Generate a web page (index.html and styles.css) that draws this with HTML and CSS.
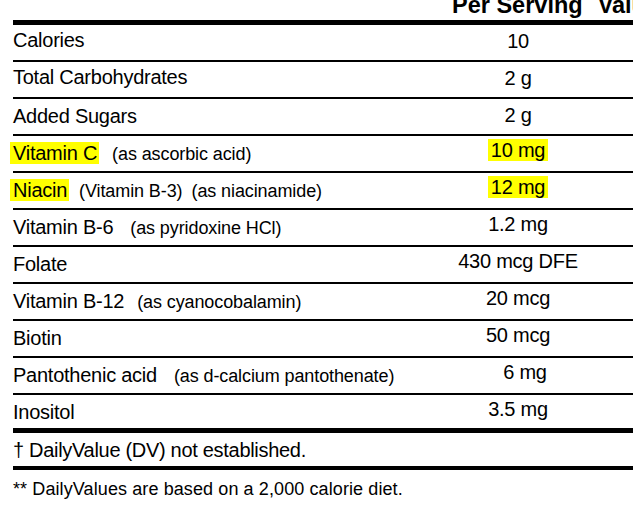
FILE: index.html
```html
<!DOCTYPE html>
<html lang="en">
<head>
<meta charset="utf-8">
<title>Supplement Facts</title>
<link rel="stylesheet" href="styles.css">
</head>
<body>
<div class="label">
  <div class="head"><span class="h-serv">Per Serving</span><span class="h-dv">Value</span></div>
  <div class="rows">
    <div class="row"><div class="name">Calories</div><div class="val">10</div></div>
    <div class="row"><div class="name">Total Carbohydrates</div><div class="val">2 g</div></div>
    <div class="row"><div class="name">Added Sugars</div><div class="val">2 g</div></div>
    <div class="row"><div class="name"><span class="hl">Vitamin C</span><span class="sub">(as ascorbic acid)</span></div><div class="val"><span class="hl-v">10 mg</span></div></div>
    <div class="row"><div class="name"><span class="hl">Niacin</span><span class="sub sub-s">(Vitamin B-3)</span><span class="sub sub-m">(as niacinamide)</span></div><div class="val"><span class="hl-v">12 mg</span></div></div>
    <div class="row"><div class="name">Vitamin B-6<span class="sub sub-l">(as pyridoxine HCl)</span></div><div class="val">1.2 mg</div></div>
    <div class="row"><div class="name">Folate</div><div class="val">430 mcg DFE</div></div>
    <div class="row"><div class="name">Vitamin B-12<span class="sub">(as cyanocobalamin)</span></div><div class="val">20 mcg</div></div>
    <div class="row"><div class="name">Biotin</div><div class="val">50 mcg</div></div>
    <div class="row"><div class="name">Pantothenic acid<span class="sub sub-l">(as d-calcium pantothenate)</span></div><div class="val val-r">6 mg</div></div>
    <div class="row"><div class="name">Inositol</div><div class="val">3.5 mg</div></div>
  </div>
  <p class="note1">† DailyValue (DV) not established.</p>
  <p class="note2">** DailyValues are based on a 2,000 calorie diet.</p>
</div>
</body>
</html>
```

FILE: styles.css
```css
html, body {
  margin: 0;
  background: #fff;
  overflow: hidden;
}

body {
  width: 633px;
  height: 510px;
  font-family: "Liberation Sans", Arial, sans-serif;
  color: #000;
}

.label {
  margin-left: 13px;
  width: 680px;
}

.head {
  height: 20px;
  display: flex;
  gap: 15px;
  padding-left: 439px;
  font-size: 23.5px;
  font-weight: bold;
  line-height: 10px;
  white-space: nowrap;
}

.rows {
  border-top: 5px solid #000;
}

.row {
  display: grid;
  grid-template-columns: 405px 200px;
  align-items: start;
  height: 35px;
  border-bottom: 2px solid #000;
}

.row:last-child {
  height: 33px;
  border-bottom: 5px solid #000;
}

.name {
  padding-top: 5px;
  font-size: 20px;
  line-height: 24px;
  letter-spacing: -0.25px;
  white-space: nowrap;
}

.row:nth-child(-n+2) .name {
  padding-top: 3px;
}

.val {
  padding-top: 2px;
  font-size: 20px;
  line-height: 24px;
  letter-spacing: -0.25px;
  text-align: center;
  white-space: nowrap;
}

.row:nth-child(-n+3) .val {
  padding-top: 4px;
}

.val-r {
  padding-left: 14px;
}

.sub {
  margin-left: 13px;
  font-size: 18px;
  letter-spacing: -0.1px;
}

.sub-s {
  margin-left: 10px;
}

.sub-m {
  margin-left: 9px;
}

.sub-l {
  margin-left: 17px;
}

.hl {
  background: #ffff00;
  margin-left: -3px;
  padding: 0 2px 0 3px;
}

.hl-v {
  background: #ffff00;
  padding: 0 3px;
}

.note1 {
  margin: 0;
  box-sizing: border-box;
  height: 37px;
  padding-top: 5px;
  border-bottom: 4px solid #000;
  font-size: 20px;
  line-height: 24px;
  letter-spacing: -0.3px;
  white-space: nowrap;
}

.note2 {
  margin: 0;
  padding-top: 8px;
  font-size: 18px;
  line-height: 22px;
  letter-spacing: 0.1px;
  white-space: nowrap;
}
```
